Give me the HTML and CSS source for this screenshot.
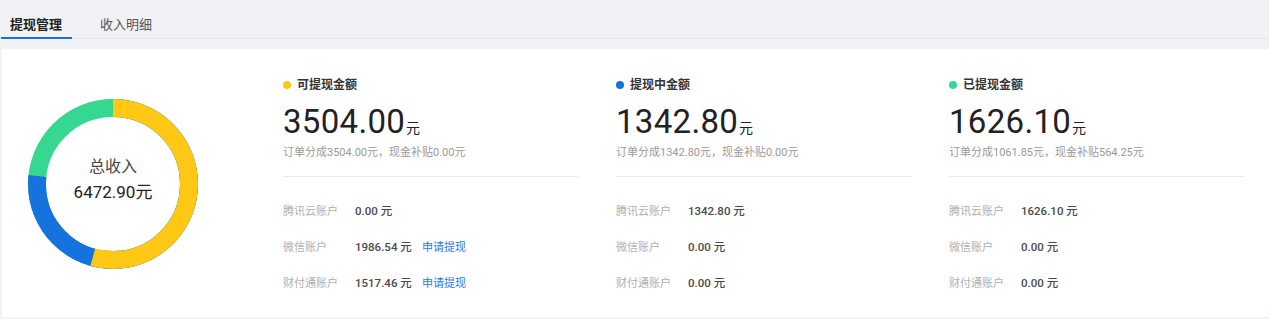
FILE: index.html
```html
<!DOCTYPE html>
<html lang="zh">
<head>
<meta charset="utf-8">
<link rel="stylesheet" href="styles.css">
</head>
<body>
<div class="tabs">
  <div class="tab active">提现管理</div>
  <div class="tab">收入明细</div>
</div>
<div class="panel">
  <div class="chart">
    <svg class="donut" width="170" height="170" viewBox="0 0 170 170">
      <g transform="rotate(-90 85 85)">
        <circle cx="85" cy="85" r="76" fill="none" stroke="#36d790" stroke-width="18"/>
        <circle cx="85" cy="85" r="76" fill="none" stroke="#1672dc" stroke-width="18" stroke-dasharray="0 0 365.7 477.5" />
        <circle cx="85" cy="85" r="76" fill="none" stroke="#ffc815" stroke-width="18" stroke-dasharray="258.9 218.6"/>
      </g>
    </svg>
    <div class="donut-text">
      <div class="donut-label">总收入</div>
      <div class="donut-value">6472.90元</div>
    </div>
  </div>
  <div class="cols">
    <div class="col">
      <div class="title"><span class="dot yellow"></span>可提现金额</div>
      <div class="big">3504.00<span class="unit">元</span></div>
      <div class="sub">订单分成3504.00元，现金补贴0.00元</div>
      <div class="sep"></div>
      <div class="row"><span class="lbl">腾讯云账户</span><span class="val">0.00 元</span></div>
      <div class="row"><span class="lbl">微信账户</span><span class="val">1986.54 元</span><a class="link">申请提现</a></div>
      <div class="row"><span class="lbl">财付通账户</span><span class="val">1517.46 元</span><a class="link">申请提现</a></div>
    </div>
    <div class="col">
      <div class="title"><span class="dot blue"></span>提现中金额</div>
      <div class="big">1342.80<span class="unit">元</span></div>
      <div class="sub">订单分成1342.80元，现金补贴0.00元</div>
      <div class="sep"></div>
      <div class="row"><span class="lbl">腾讯云账户</span><span class="val">1342.80 元</span></div>
      <div class="row"><span class="lbl">微信账户</span><span class="val">0.00 元</span></div>
      <div class="row"><span class="lbl">财付通账户</span><span class="val">0.00 元</span></div>
    </div>
    <div class="col">
      <div class="title"><span class="dot green"></span>已提现金额</div>
      <div class="big">1626.10<span class="unit">元</span></div>
      <div class="sub">订单分成1061.85元，现金补贴564.25元</div>
      <div class="sep"></div>
      <div class="row"><span class="lbl">腾讯云账户</span><span class="val">1626.10 元</span></div>
      <div class="row"><span class="lbl">微信账户</span><span class="val">0.00 元</span></div>
      <div class="row"><span class="lbl">财付通账户</span><span class="val">0.00 元</span></div>
    </div>
  </div>
</div>
</body>
</html>
```
FILE: styles.css
```css
* { box-sizing: border-box; }
html, body { margin: 0; padding: 0; }
body {
  background: #f1f2f6;
  font-family: Roboto, "Noto Sans CJK SC", sans-serif;
  color: #333;
  width: 1269px;
  height: 319px;
  overflow: hidden;
}
.tabs {
  display: flex;
  height: 39px;
  border-bottom: 1px solid #e4e6ec;
  padding-left: 1px;
}
.tab {
  font-size: 13px;
  line-height: 16px;
  padding: 17px 0 0 9px;
  width: 71px;
  color: #555;
  margin-right: 19px;
}
.tab.active {
  color: #222;
  font-weight: bold;
  border-bottom: 2px solid #1a6fe6;
  height: 39px;
  margin-bottom: -1px;
}
.panel {
  margin: 10px 0 0 2px;
  background: #fff;
  height: 268px;
  display: flex;
}
.chart {
  position: relative;
  margin: 50px 0 0 26px;
  width: 170px;
  height: 170px;
}
.donut { display: block; }
.donut-text {
  position: absolute;
  inset: 0;
  display: flex;
  flex-direction: column;
  align-items: center;
  justify-content: center;
  padding-bottom: 8px;
}
.donut-label { font-size: 16px; line-height: 22px; color: #444; }
.donut-value { font-size: 17px; line-height: 24px; color: #222; margin-top: 2px; }
.cols {
  display: flex;
  gap: 38px;
  margin-left: 85px;
  padding-top: 28px;
}
.col { width: 295px; }
.title {
  display: flex;
  align-items: center;
  font-size: 12px;
  line-height: 16px;
  font-weight: bold;
  color: #333;
}
.dot {
  width: 8px;
  height: 8px;
  border-radius: 50%;
  margin-right: 6px;
}
.yellow { background: #ffc619; }
.blue { background: #1672dc; }
.green { background: #36d790; }
.big {
  font-size: 33px;
  line-height: 33px;
  color: #222;
  margin-top: 12px;
  letter-spacing: 0.3px;
}
.unit { font-size: 14px; margin-left: 1px; }
.sub {
  font-size: 11px;
  line-height: 16px;
  color: #9a9a9a;
}
.sep {
  height: 1px;
  background: #e8e8e8;
  margin-top: 15px;
  margin-bottom: 15px;
}
.row {
  display: flex;
  align-items: center;
  height: 36px;
  font-size: 11px;
}
.lbl { width: 72px; color: #b0b0b0; }
.val { font-size: 11.5px; font-weight: 500; color: #4a4a4a; width: 67px; }
.link { color: #2a76f0; cursor: pointer; }
```
